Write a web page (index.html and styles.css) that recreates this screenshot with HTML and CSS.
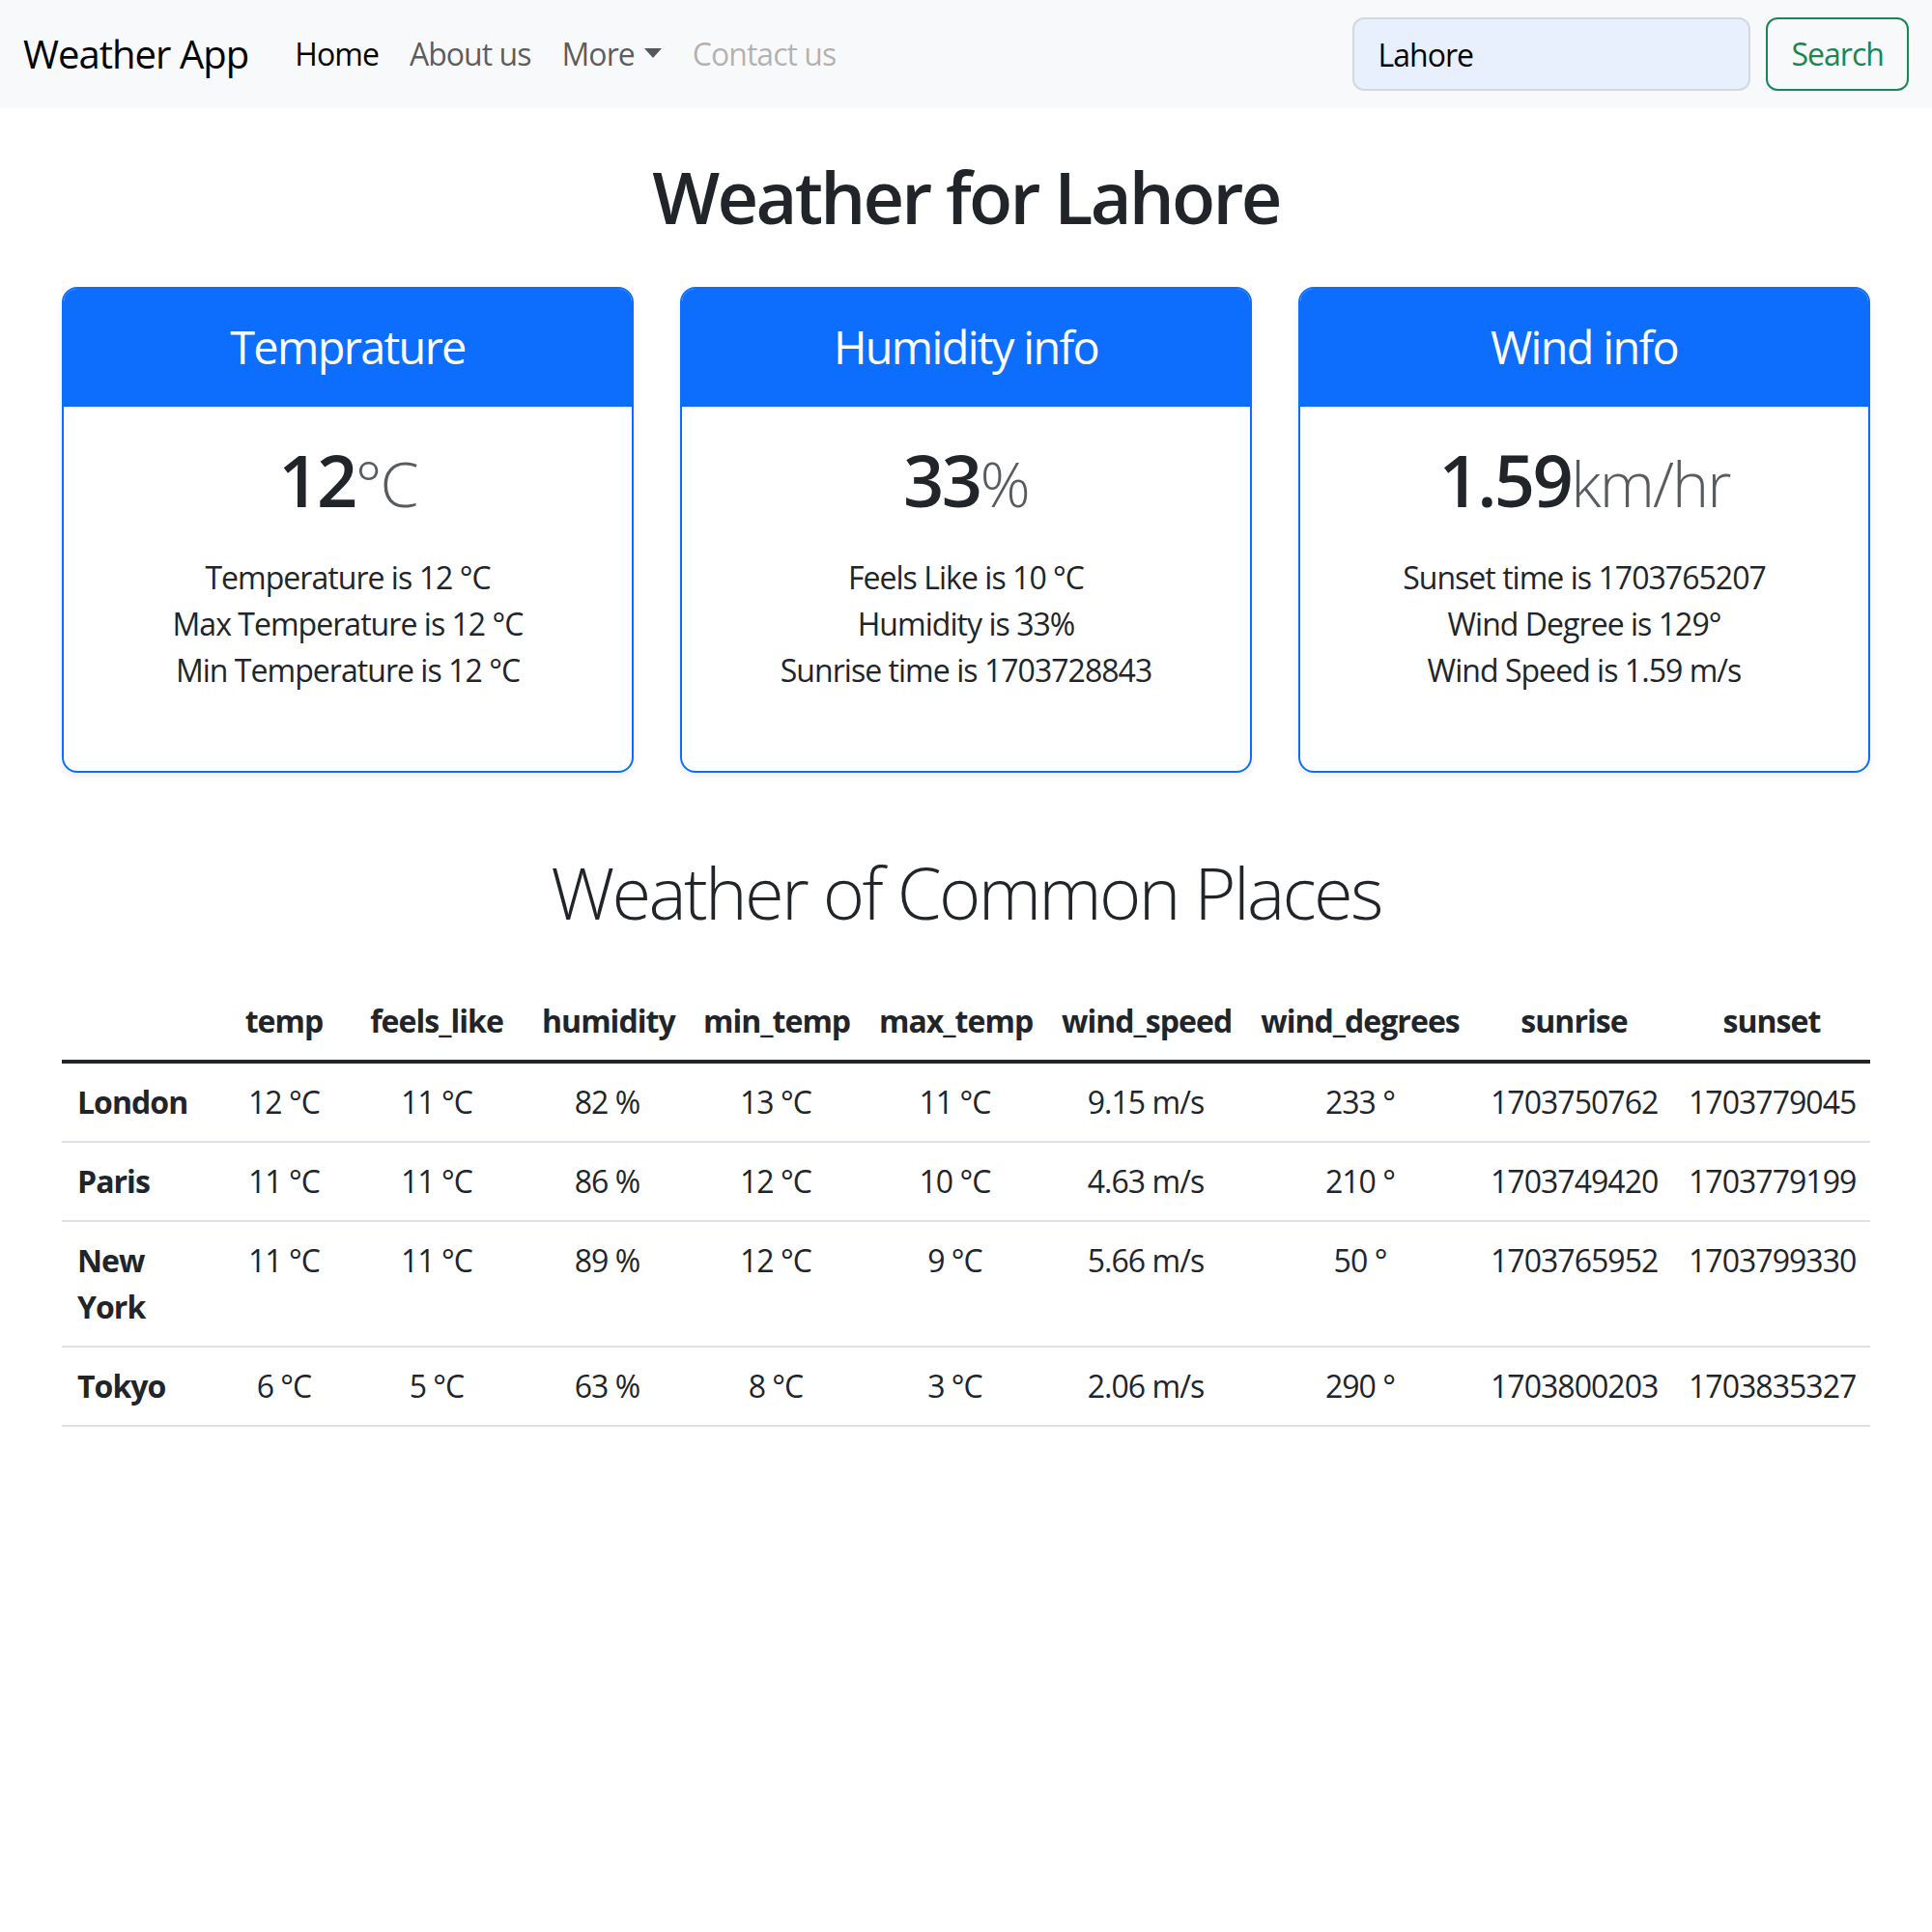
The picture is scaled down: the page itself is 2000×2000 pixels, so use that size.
FILE: index.html
```html
<!DOCTYPE html>
<html lang="en">
<head>
<meta charset="utf-8">
<title>Weather App</title>
<link rel="stylesheet" href="styles.css">
</head>
<body>
<nav class="navbar">
  <div class="navbar-inner">
    <a class="brand" href="#">Weather App</a>
    <ul class="nav">
      <li><a class="nav-link active" href="#">Home</a></li>
      <li><a class="nav-link" href="#">About us</a></li>
      <li><a class="nav-link" href="#">More<span class="caret"></span></a></li>
      <li><a class="nav-link disabled" href="#">Contact us</a></li>
    </ul>
    <form class="search">
      <input class="search-input" type="search" value="Lahore" aria-label="Search">
      <button class="search-btn" type="button">Search</button>
    </form>
  </div>
</nav>

<main class="container">
  <h1 class="page-title">Weather for Lahore</h1>

  <div class="cards">
    <div class="card">
      <div class="card-header"><h4 class="card-heading">Temprature</h4></div>
      <div class="card-body">
        <h1 class="card-value">12<small class="unit">°C</small></h1>
        <ul class="card-list">
          <li>Temperature is 12 °C</li>
          <li>Max Temperature is 12 °C</li>
          <li>Min Temperature is 12 °C</li>
        </ul>
      </div>
    </div>
    <div class="card">
      <div class="card-header"><h4 class="card-heading">Humidity info</h4></div>
      <div class="card-body">
        <h1 class="card-value">33<small class="unit">%</small></h1>
        <ul class="card-list">
          <li>Feels Like is 10 °C</li>
          <li>Humidity is 33%</li>
          <li>Sunrise time is 1703728843</li>
        </ul>
      </div>
    </div>
    <div class="card">
      <div class="card-header"><h4 class="card-heading">Wind info</h4></div>
      <div class="card-body">
        <h1 class="card-value">1.59<small class="unit">km/hr</small></h1>
        <ul class="card-list">
          <li>Sunset time is 1703765207</li>
          <li>Wind Degree is 129°</li>
          <li>Wind Speed is 1.59 m/s</li>
        </ul>
      </div>
    </div>
  </div>

  <h2 class="section-title">Weather of Common Places</h2>

  <table class="weather-table">
    <colgroup>
      <col class="c-city">
      <col class="c-temp">
      <col class="c-feels">
      <col class="c-hum">
      <col class="c-min">
      <col class="c-max">
      <col class="c-ws">
      <col class="c-wd">
      <col class="c-sr">
      <col class="c-ss">
    </colgroup>
    <thead>
      <tr>
        <th></th>
        <th>temp</th>
        <th>feels_like</th>
        <th>humidity</th>
        <th>min_temp</th>
        <th>max_temp</th>
        <th>wind_speed</th>
        <th>wind_degrees</th>
        <th>sunrise</th>
        <th>sunset</th>
      </tr>
    </thead>
    <tbody>
      <tr>
        <th class="city">London</th>
        <td>12 °C</td><td>11 °C</td><td>82 %</td><td>13 °C</td><td>11 °C</td>
        <td>9.15 m/s</td><td>233 °</td><td>1703750762</td><td>1703779045</td>
      </tr>
      <tr>
        <th class="city">Paris</th>
        <td>11 °C</td><td>11 °C</td><td>86 %</td><td>12 °C</td><td>10 °C</td>
        <td>4.63 m/s</td><td>210 °</td><td>1703749420</td><td>1703779199</td>
      </tr>
      <tr>
        <th class="city">New York</th>
        <td>11 °C</td><td>11 °C</td><td>89 %</td><td>12 °C</td><td>9 °C</td>
        <td>5.66 m/s</td><td>50 °</td><td>1703765952</td><td>1703799330</td>
      </tr>
      <tr>
        <th class="city">Tokyo</th>
        <td>6 °C</td><td>5 °C</td><td>63 %</td><td>8 °C</td><td>3 °C</td>
        <td>2.06 m/s</td><td>290 °</td><td>1703800203</td><td>1703835327</td>
      </tr>
    </tbody>
  </table>
</main>
</body>
</html>
```

FILE: styles.css
```css
* {
  box-sizing: border-box;
}

html, body {
  margin: 0;
  padding: 0;
}

body {
  font-family: "Open Sans", "Noto Sans", "Liberation Sans", sans-serif;
  font-size: 32px;
  line-height: 1.5;
  color: #212529;
  background: #fff;
  letter-spacing: -0.03em;
}

a {
  text-decoration: none;
}

/* ---------- Navbar ---------- */
.navbar {
  background: #f8f9fa;
}

.navbar-inner {
  display: flex;
  align-items: center;
  height: 112px;
  padding: 16px 24px;
}

.brand {
  font-size: 40px;
  line-height: 60px;
  padding: 10px 0;
  margin-right: 32px;
  color: #000;
}

.nav {
  display: flex;
  list-style: none;
  margin: 0;
  padding: 0;
}

.nav-link {
  display: block;
  padding: 16px;
  line-height: 48px;
  color: rgba(0, 0, 0, 0.65);
}

.nav-link.active {
  color: #000;
}

.nav-link.disabled {
  color: rgba(0, 0, 0, 0.3);
}

.caret {
  display: inline-block;
  margin-left: 10px;
  vertical-align: 8px;
  border-top: 10px solid currentColor;
  border-left: 9px solid transparent;
  border-right: 9px solid transparent;
}

.search {
  display: flex;
  margin: 0 0 0 auto;
}

.search-input {
  width: 412px;
  height: 76px;
  margin-right: 16px;
  padding: 12px 24px;
  font: inherit;
  letter-spacing: inherit;
  color: #000;
  background: #e8f0fe;
  border: 2px solid #d3d8de;
  border-radius: 12px;
  outline: none;
}

.search-btn {
  height: 76px;
  padding: 12px 24px;
  font: inherit;
  letter-spacing: inherit;
  line-height: 48px;
  color: #198754;
  background: transparent;
  border: 2px solid #198754;
  border-radius: 12px;
}

/* ---------- Main ---------- */
.container {
  width: 1920px;
  margin: 0 auto;
  padding: 0 24px;
}

.page-title {
  margin: 48px 0;
  font-size: 74px;
  line-height: 1.2;
  font-weight: 600;
  text-align: center;
  letter-spacing: -0.037em;
}

.cards {
  display: grid;
  grid-template-columns: repeat(3, 1fr);
  column-gap: 48px;
  margin-bottom: 32px;
  text-align: center;
}

.card {
  margin-bottom: 48px;
  border: 2px solid #0d6efd;
  border-radius: 16px;
  box-shadow: 0 4px 8px rgba(0, 0, 0, 0.075);
  overflow: hidden;
  background: #fff;
}

.card-header {
  padding: 32px;
  background: #0d6efd;
  border-bottom: 2px solid #0d6efd;
  color: #fff;
}

.card-heading {
  margin: 0;
  font-size: 46.8px;
  line-height: 1.2;
  font-weight: 400;
  letter-spacing: -0.035em;
}

.card-body {
  padding: 32px;
}

.card-value {
  margin: 0;
  font-size: 74px;
  line-height: 1.2;
  font-weight: 600;
  letter-spacing: -0.035em;
}

.unit {
  font-size: 0.875em;
  font-weight: 300;
  color: rgba(33, 37, 41, 0.75);
  letter-spacing: -0.03em;
}

.card-list {
  list-style: none;
  margin: 32px 0 48px;
  padding: 0;
}

.section-title {
  margin: 0 0 48px;
  font-size: 74px;
  line-height: 1.2;
  font-weight: 300;
  text-align: center;
  letter-spacing: -0.036em;
}

/* ---------- Table ---------- */
.weather-table {
  width: 100%;
  table-layout: fixed;
  border-collapse: collapse;
  margin-bottom: 32px;
}

.c-city { width: 165px; }
.c-temp { width: 130px; }
.c-feels { width: 186px; }
.c-hum { width: 167px; }
.c-min { width: 182px; }
.c-max { width: 189px; }
.c-ws { width: 206px; }
.c-wd { width: 238px; }
.c-sr { width: 205px; }
.c-ss { width: 204px; }

.weather-table th,
.weather-table td {
  padding: 16px;
  line-height: 48px;
  text-align: center;
  vertical-align: top;
  border-bottom: 2px solid #dee2e6;
}

.weather-table th {
  font-weight: 700;
}

.weather-table tbody {
  border-top: 4px solid #212529;
}

.weather-table .city {
  text-align: left;
}
```
